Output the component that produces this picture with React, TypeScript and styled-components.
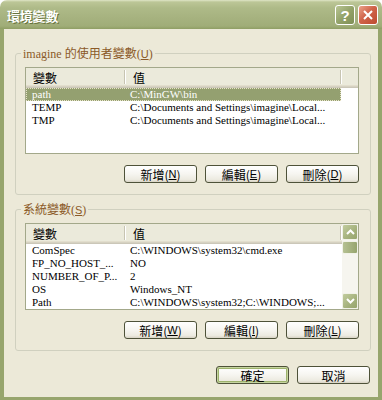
import React from "react";
import styled, { createGlobalStyle } from "styled-components";

const GlobalStyle = createGlobalStyle`
  html, body { margin: 0; padding: 0; background: #ffffff; }
  body { width: 382px; height: 400px; overflow: hidden; }
`;

const Window = styled.div`
  width: 382px;
  height: 400px;
  display: flex;
  flex-direction: column;
  border-radius: 7px 7px 0 0;
  overflow: hidden;
  font-family: "Liberation Serif", "Noto Sans CJK TC", serif;
  font-size: 12px;
`;

const TitleBar = styled.div`
  height: 29px;
  flex: none;
  box-sizing: border-box;
  display: flex;
  align-items: center;
  padding: 1px 4px 0 7px;
  gap: 3px;
  background: linear-gradient(
    #dfe5c7 0px,
    #bcc697 2px,
    #aeba88 8px,
    #a6b27f 18px,
    #a0ad78 26px,
    #8f9e64 29px
  );
`;

const Title = styled.div`
  flex: 1;
  color: #ffffff;
  font-family: "Noto Sans CJK TC", sans-serif;
  font-weight: 700;
  font-size: 13px;
  letter-spacing: -0.2px;
  text-shadow: 1px 1px 0 #66733d;
`;

const CaptionButton = styled.div<{ $variant: "help" | "close" }>`
  width: 20px;
  height: 20px;
  box-sizing: border-box;
  border: 1px solid #ffffff;
  border-radius: 3px;
  display: flex;
  align-items: center;
  justify-content: center;
  color: #ffffff;
  font-family: "Liberation Sans", sans-serif;
  font-weight: 700;
  font-size: 15px;
  background: ${(p) =>
    p.$variant === "close"
      ? "linear-gradient(135deg, #eba38b 0%, #d0644a 45%, #bd4a2f 100%)"
      : "linear-gradient(135deg, #b9c594 0%, #94a36a 50%, #7f8f55 100%)"};
`;

const Frame = styled.div`
  flex: 1;
  display: flex;
  flex-direction: column;
  background: #ece9d8;
  border-style: solid;
  border-color: #97a56d;
  border-width: 0 4px 3px 4px;
  padding: 17px 7px 13px 11px;
  gap: 7px;
`;

const Group = styled.fieldset`
  margin: 0;
  padding: 7px 11px 11px 9px;
  min-width: 0;
  border: 1px solid #d0d0bf;
  border-radius: 3px;
  display: flex;
  flex-direction: column;
  gap: 11px;
`;

const Legend = styled.legend`
  margin-left: -4px;
  padding: 0 2px;
  line-height: 14px;
  height: 14px;
  color: #8b5a28;
  font-family: "Liberation Serif", "Noto Sans CJK TC", serif;
  font-size: 12px;
`;

const Cjk = styled.span`
  font-family: "Noto Sans CJK TC", sans-serif;
  font-size: 12px;
`;

const Key = styled.span`
  text-decoration: underline;
  font-family: "Liberation Sans", sans-serif;
  font-size: 11px;
`;

const List = styled.div`
  height: 87px;
  box-sizing: border-box;
  border: 1px solid #a3a88a;
  background: #ffffff;
  display: flex;
`;

const ListMain = styled.div`
  flex: 1;
  display: flex;
  flex-direction: column;
  overflow: hidden;
`;

const Header = styled.div`
  height: 20px;
  flex: none;
  display: flex;
  align-items: center;
  background: #ebeadb;
  box-shadow: inset 0 -1px 0 #cbc7b8, inset 0 -2px 0 #d6d2c2, inset 0 -3px 0 #e2decd;
`;

const HeaderCell = styled.div<{ $w: number; $pad: number }>`
  width: ${(p) => p.$w}px;
  flex: none;
  box-sizing: border-box;
  padding-left: ${(p) => p.$pad}px;
  padding-bottom: 2px;
  font-family: "Noto Sans CJK TC", sans-serif;
  font-size: 12px;
  color: #000;
`;

const HeaderDivider = styled.div`
  width: 1px;
  height: 14px;
  margin-bottom: 2px;
  flex: none;
  background: #c7c4b2;
  box-shadow: 1px 0 0 #ffffff;
`;

const Row = styled.div<{ $selected?: boolean }>`
  width: 315px;
  height: 13px;
  flex: none;
  display: flex;
  box-sizing: border-box;
  background: ${(p) => (p.$selected ? "#94a070" : "transparent")};
  color: ${(p) => (p.$selected ? "#ffffff" : "#000000")};
  outline: ${(p) => (p.$selected ? "1px dotted #e7e2c8" : "none")};
  outline-offset: -1px;
`;

const Cell = styled.div<{ $w: number; $pad: number }>`
  width: ${(p) => p.$w}px;
  flex: none;
  box-sizing: border-box;
  padding-left: ${(p) => p.$pad}px;
  font-family: "Liberation Serif", serif;
  font-size: 11px;
  line-height: 13px;
  white-space: nowrap;
  overflow: hidden;
`;

const ScrollBar = styled.div`
  width: 16px;
  flex: none;
  display: flex;
  flex-direction: column;
  background: #f6f5ef;
`;

const ScrollArrow = styled.div`
  height: 16px;
  flex: none;
  box-sizing: border-box;
  border: 1px solid #f1f2e8;
  border-radius: 2px;
  display: flex;
  align-items: center;
  justify-content: center;
  background: linear-gradient(135deg, #c2cc9e 0%, #a4b17c 60%, #97a56e 100%);
`;

const ScrollThumb = styled.div`
  height: 13px;
  flex: none;
  margin-top: 1px;
  box-sizing: border-box;
  border: 1px solid #f1f2e8;
  border-radius: 2px;
  background: linear-gradient(90deg, #b6c193 0%, #a3b07d 60%, #96a46d 100%);
`;

const ScrollTrack = styled.div`
  flex: 1;
`;

const ButtonRow = styled.div<{ $right?: number }>`
  display: flex;
  justify-content: flex-end;
  gap: 8px;
  margin-right: ${(p) => p.$right ?? 0}px;
`;

const Button = styled.div<{ $default?: boolean }>`
  width: 73px;
  height: 18px;
  box-sizing: border-box;
  border: 1px solid #4e5239;
  border-radius: 3px;
  display: flex;
  align-items: center;
  justify-content: center;
  font-family: "Noto Sans CJK TC", sans-serif;
  font-size: 12px;
  color: #000;
  background: linear-gradient(#ffffff 0%, #f6f5f0 50%, #eceae0 85%, #d8d3c4 100%);
  box-shadow: ${(p) =>
    p.$default ? "inset 0 0 0 1px #c6d5a0, inset 0 0 0 2px #9db26c" : "none"};
`;

const Spacer = styled.div`
  flex: 1;
`;

type Var = { name: string; value: string };

const userVars: Var[] = [
  { name: "path", value: "C:\\MinGW\\bin" },
  { name: "TEMP", value: "C:\\Documents and Settings\\imagine\\Local..." },
  { name: "TMP", value: "C:\\Documents and Settings\\imagine\\Local..." },
];

const sysVars: Var[] = [
  { name: "ComSpec", value: "C:\\WINDOWS\\system32\\cmd.exe" },
  { name: "FP_NO_HOST_...", value: "NO" },
  { name: "NUMBER_OF_P...", value: "2" },
  { name: "OS", value: "Windows_NT" },
  { name: "Path", value: "C:\\WINDOWS\\system32;C:\\WINDOWS;..." },
];

function Chevron({ up }: { up: boolean }) {
  return (
    <svg width="9" height="6" viewBox="0 0 9 6">
      <path
        d={up ? "M1 5 L4.5 1.5 L8 5" : "M1 1 L4.5 4.5 L8 1"}
        fill="none"
        stroke="#ffffff"
        strokeWidth="2"
      />
    </svg>
  );
}

function VarList({ rows, selected, scroll }: { rows: Var[]; selected?: number; scroll?: boolean }) {
  return (
    <List>
      <ListMain>
        <Header>
          <HeaderCell $w={98} $pad={7}>變數</HeaderCell>
          <HeaderDivider />
          <HeaderCell $w={215} $pad={8}>值</HeaderCell>
          <HeaderDivider />
        </Header>
        {rows.map((r, i) => (
          <Row key={r.name} $selected={i === selected}>
            <Cell $w={99} $pad={6}>{r.name}</Cell>
            <Cell $w={216} $pad={5}>{r.value}</Cell>
          </Row>
        ))}
      </ListMain>
      {scroll && (
        <ScrollBar>
          <ScrollArrow>
            <Chevron up />
          </ScrollArrow>
          <ScrollThumb />
          <ScrollTrack />
          <ScrollArrow>
            <Chevron up={false} />
          </ScrollArrow>
        </ScrollBar>
      )}
    </List>
  );
}

export default function App() {
  return (
    <>
      <GlobalStyle />
      <Window>
        <TitleBar>
          <Title>環境變數</Title>
          <CaptionButton $variant="help">?</CaptionButton>
          <CaptionButton $variant="close">
            <svg width="10" height="10" viewBox="0 0 10 10">
              <path d="M1 1 L9 9 M9 1 L1 9" stroke="#ffffff" strokeWidth="2" />
            </svg>
          </CaptionButton>
        </TitleBar>
        <Frame>
          <Group>
            <Legend>
              imagine <Cjk>的使用者變數</Cjk>(<Key>U</Key>)
            </Legend>
            <VarList rows={userVars} selected={0} />
            <ButtonRow>
              <Button>新增(<Key>N</Key>)</Button>
              <Button>編輯(<Key>E</Key>)</Button>
              <Button>刪除(<Key>D</Key>)</Button>
            </ButtonRow>
          </Group>
          <Group>
            <Legend>
              <Cjk>系統變數</Cjk>(<Key>S</Key>)
            </Legend>
            <VarList rows={sysVars} scroll />
            <ButtonRow>
              <Button>新增(<Key>W</Key>)</Button>
              <Button>編輯(<Key>I</Key>)</Button>
              <Button>刪除(<Key>L</Key>)</Button>
            </ButtonRow>
          </Group>
          <Spacer />
          <ButtonRow $right={1}>
            <Button $default>確定</Button>
            <Button>取消</Button>
          </ButtonRow>
        </Frame>
      </Window>
    </>
  );
}
